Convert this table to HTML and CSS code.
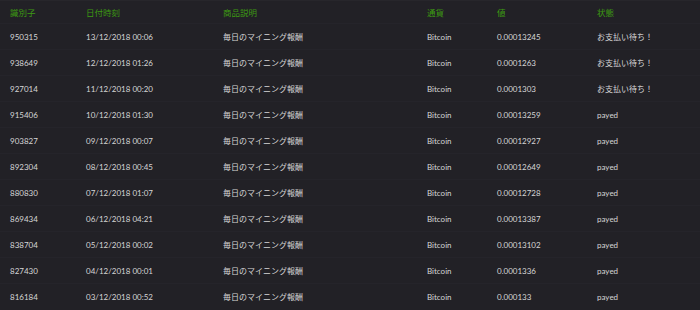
FILE: index.html
```html
<!DOCTYPE html>
<html lang="ja">
<head>
<meta charset="utf-8">
<link rel="stylesheet" href="styles.css">
</head>
<body>
<table class="tx">
<thead>
<tr><th class="c-id">識別子</th><th class="c-date">日付時刻</th><th class="c-desc">商品説明</th><th class="c-cur">通貨</th><th class="c-val">値</th><th class="c-st">状態</th></tr>
</thead>
<tbody>
<tr><td>950315</td><td>13/12/2018 00:06</td><td>毎日のマイニング報酬</td><td>Bitcoin</td><td>0.00013245</td><td>お支払い待ち！</td></tr>
<tr><td>938649</td><td>12/12/2018 01:26</td><td>毎日のマイニング報酬</td><td>Bitcoin</td><td>0.0001263</td><td>お支払い待ち！</td></tr>
<tr><td>927014</td><td>11/12/2018 00:20</td><td>毎日のマイニング報酬</td><td>Bitcoin</td><td>0.0001303</td><td>お支払い待ち！</td></tr>
<tr><td>915406</td><td>10/12/2018 01:30</td><td>毎日のマイニング報酬</td><td>Bitcoin</td><td>0.00013259</td><td>payed</td></tr>
<tr><td>903827</td><td>09/12/2018 00:07</td><td>毎日のマイニング報酬</td><td>Bitcoin</td><td>0.00012927</td><td>payed</td></tr>
<tr><td>892304</td><td>08/12/2018 00:45</td><td>毎日のマイニング報酬</td><td>Bitcoin</td><td>0.00012649</td><td>payed</td></tr>
<tr><td>880830</td><td>07/12/2018 01:07</td><td>毎日のマイニング報酬</td><td>Bitcoin</td><td>0.00012728</td><td>payed</td></tr>
<tr><td>869434</td><td>06/12/2018 04:21</td><td>毎日のマイニング報酬</td><td>Bitcoin</td><td>0.00013387</td><td>payed</td></tr>
<tr><td>838704</td><td>05/12/2018 00:02</td><td>毎日のマイニング報酬</td><td>Bitcoin</td><td>0.00013102</td><td>payed</td></tr>
<tr><td>827430</td><td>04/12/2018 00:01</td><td>毎日のマイニング報酬</td><td>Bitcoin</td><td>0.0001336</td><td>payed</td></tr>
<tr><td>816184</td><td>03/12/2018 00:52</td><td>毎日のマイニング報酬</td><td>Bitcoin</td><td>0.000133</td><td>payed</td></tr>
</tbody>
</table>
</body>
</html>
```
FILE: styles.css
```css
html, body {
  margin: 0;
  padding: 0;
  background: #222126;
}
body {
  font-family: Lato, "Noto Sans CJK JP", sans-serif;
  font-size: 8px;
  color: #d6d6d6;
}
.tx {
  width: 700px;
  border-collapse: collapse;
  table-layout: fixed;
}
.tx th {
  height: 22px;
  padding: 0;
  text-align: left;
  font-weight: normal;
  font-size: 8.5px;
  color: #3d9a12;
  border-top: 1px solid #27262b;
  vertical-align: middle;
}
.tx td {
  height: 25px;
  padding: 0;
  text-align: left;
  vertical-align: middle;
  border-top: 1px solid #25242a;
}
.tx tr > :first-child {
  padding-left: 10px;
}
.c-id { width: 76px; }
.c-date { width: 137px; }
.c-desc { width: 204px; }
.c-cur { width: 70px; }
.c-val { width: 100px; }
.c-st { width: auto; }
```
